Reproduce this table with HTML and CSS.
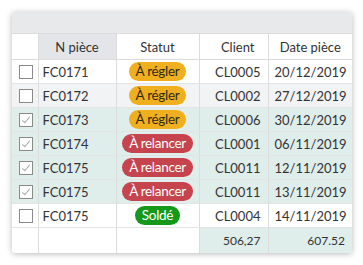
FILE: index.html
```html
<!DOCTYPE html>
<html lang="fr">
<head>
<meta charset="utf-8">
<link rel="stylesheet" href="styles.css">
</head>
<body>
<div class="card">
  <div class="toolbar"></div>
  <table class="grid">
    <colgroup>
      <col class="c-check"><col class="c-num"><col class="c-status"><col class="c-client"><col class="c-date">
    </colgroup>
    <thead>
      <tr><th></th><th class="sorted">N pièce</th><th>Statut</th><th class="right">Client</th><th>Date pièce</th></tr>
    </thead>
    <tbody>
      <tr><td><span class="box"></span></td><td>FC0171</td><td class="center"><span class="badge warn">À régler</span></td><td class="right">CL0005</td><td class="right">20/12/2019</td></tr>
      <tr class="alt"><td><span class="box"></span></td><td>FC0172</td><td class="center"><span class="badge warn">À régler</span></td><td class="right">CL0002</td><td class="right">27/12/2019</td></tr>
      <tr class="sel"><td><span class="box checked"></span></td><td>FC0173</td><td class="center"><span class="badge warn">À régler</span></td><td class="right">CL0006</td><td class="right">30/12/2019</td></tr>
      <tr class="sel"><td><span class="box checked"></span></td><td>FC0174</td><td class="center"><span class="badge danger">À relancer</span></td><td class="right">CL0001</td><td class="right">06/11/2019</td></tr>
      <tr class="sel"><td><span class="box checked"></span></td><td>FC0175</td><td class="center"><span class="badge danger">À relancer</span></td><td class="right">CL0011</td><td class="right">12/11/2019</td></tr>
      <tr class="sel"><td><span class="box checked"></span></td><td>FC0175</td><td class="center"><span class="badge danger">À relancer</span></td><td class="right">CL0011</td><td class="right">13/11/2019</td></tr>
      <tr><td><span class="box"></span></td><td>FC0175</td><td class="center"><span class="badge ok">Soldé</span></td><td class="right">CL0004</td><td class="right">14/11/2019</td></tr>
    </tbody>
    <tfoot>
      <tr><td></td><td></td><td></td><td class="right sum">506,27</td><td class="right sum">607.52</td></tr>
    </tfoot>
  </table>
</div>
</body>
</html>
```

FILE: styles.css
```css
html, body { margin: 0; padding: 0; background: #ffffff; }
body { padding: 12px 11px 12px 12px; font-family: Lato, "Open Sans", sans-serif; color: #333; }
.card {
  width: 340px;
  background: #fff;
  border-radius: 3px;
  box-shadow: 0 1px 6px rgba(0,0,0,0.28);
  overflow: hidden;
}
.toolbar {
  height: 21px;
  background: #e8e9eb;
  border-bottom: 1px solid #dcdcdc;
}
.grid {
  width: 100%;
  border-collapse: collapse;
  table-layout: fixed;
  font-size: 13px;
}
.c-check { width: 26px; }
.c-num { width: 78px; }
.c-status { width: 83px; }
.c-client { width: 69px; }
.c-date { width: 84px; }
.grid th, .grid td {
  border-right: 1px solid #dcdcdc;
  border-bottom: 1px solid #e4e4e4;
  padding: 0 6px;
  white-space: nowrap;
}
.grid th:last-child, .grid td:last-child { border-right: none; }
.grid th {
  height: 25px;
  font-weight: 400;
  text-align: center;
  border-bottom: 1px solid #dcdcdc;
}
.grid th.sorted { background: #e4e5e8; }
.grid th.right { text-align: right; padding-right: 13px; }
.grid tbody td { height: 23px; }
.grid td:first-child { padding: 0 0 0 7px; }
.grid td:nth-child(2) { padding-left: 4px; }
.grid td.center { padding: 0 2px; }
.center { text-align: center; }
.right { text-align: right; }
.grid td.right { padding-right: 7px; }
.alt td { background: #f2f3f5; }
.sel td { background: #dfedeb; }
.grid tfoot td { height: 25px; border-bottom: none; font-size: 12px; }
.grid tfoot td.sum { background: #dfedeb; }
.box {
  display: block;
  width: 12px; height: 12px;
  border: 1px solid #8a8a8a;
  background: #fff;
  position: relative;
}
.box.checked::after {
  content: "";
  position: absolute;
  left: 4px; top: 1px;
  width: 3px; height: 7px;
  border: solid #aaa;
  border-width: 0 1px 1px 0;
  transform: rotate(40deg);
}
.badge {
  display: inline-block;
  vertical-align: middle;
  height: 19px;
  line-height: 19px;
  padding: 0 7px;
  border-radius: 10px;
  font-size: 13.5px;
  letter-spacing: -0.3px;
}
.warn { background: #efaf1f; color: #2e2a1c; }
.danger { background: #c5444e; color: #fff; }
.ok { background: #15991a; color: #fff; }
```
